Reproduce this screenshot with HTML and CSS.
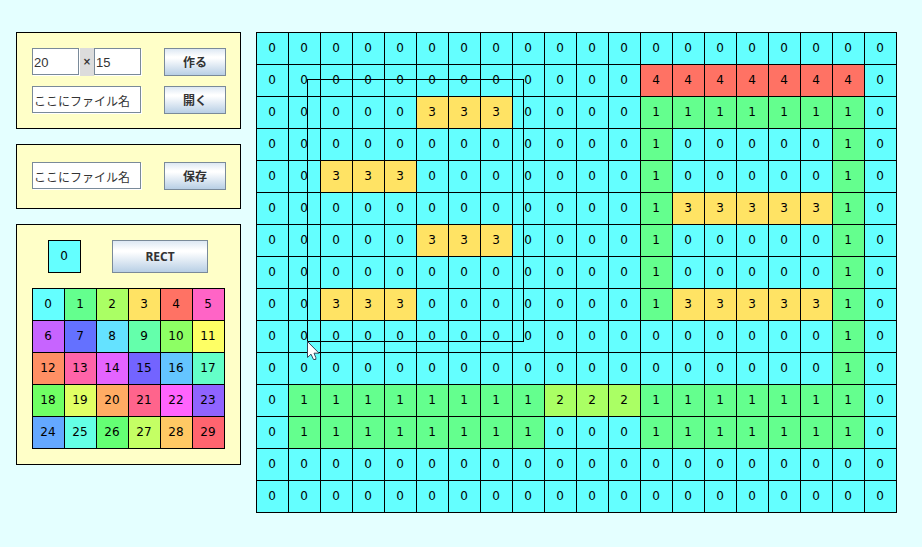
FILE: index.html
```
<!DOCTYPE html>
<html lang="ja">
<head>
<meta charset="utf-8">
<title>Map Editor</title>
<link rel="stylesheet" href="styles.css">
</head>
<body>
<main class="editor">
  <div class="sidebar">
    <form class="panel panel-new">
      <div class="row">
        <div class="size">
          <input class="field number" type="text" value="20" aria-label="幅">
          <span class="times">×</span>
          <input class="field number" type="text" value="15" aria-label="高さ">
        </div>
        <button class="button" type="button">作る</button>
      </div>
      <div class="row">
        <input class="field file" type="text" value="ここにファイル名" aria-label="開くファイル名">
        <button class="button" type="button">開く</button>
      </div>
    </form>
    <form class="panel panel-save">
      <div class="row">
        <input class="field file" type="text" value="ここにファイル名" aria-label="保存するファイル名">
        <button class="button" type="button">保存</button>
      </div>
    </form>
    <section class="panel panel-tools">
      <div class="tools">
        <div class="swatch">0</div>
        <button class="button mode" type="button">RECT</button>
      </div>
      <table class="tiles" id="palette"></table>
    </section>
  </div>
  <div class="map">
    <table class="tiles" id="map"></table>
    <div class="selection">
      <svg class="pointer" viewBox="0 0 13 20" width="13" height="20" aria-hidden="true">
        <path d="M.5 .5V16.5L4 13.2L6.5 18.5H8.8V16.5L7 12.2H12Z" fill="#fff" stroke="#31465c"/>
      </svg>
    </div>
  </div>
</main>
<script src="editor.js"></script>
</body>
</html>
```

FILE: styles.css
```
* {
  box-sizing: border-box;
}

body {
  margin: 0;
  padding: 32px 16px;
  background: #e4ffff;
  color: #333;
  font: 12px/16px "DejaVu Sans", "Noto Sans CJK JP", sans-serif;
}

.editor {
  display: flex;
  align-items: flex-start;
  gap: 15px;
}

.sidebar {
  display: flex;
  flex-direction: column;
  flex: none;
  gap: 15px;
}

.panel {
  display: flex;
  flex-direction: column;
  gap: 10px;
  padding: 15px 14px 14px 15px;
  border: 1px solid #000;
  background: #ffffc8;
}

.panel-save {
  padding-top: 17px;
  padding-bottom: 18px;
}

.panel-tools {
  gap: 15px;
  padding: 15px;
}

.row {
  display: flex;
  gap: 22px;
}

.size {
  display: flex;
}

.field {
  height: 27px;
  margin: 0 1px 1px 0;
  padding: 2px 1px 0;
  border: 1px solid #7a8a99;
  outline: 0;
  background: #fff;
  box-shadow: 1px 1px #fff;
  color: #333;
  font: 12px/16px "Liberation Sans", "Noto Sans CJK JP", sans-serif;
}

.number {
  width: 47px;
  font-size: 13px;
}

.file {
  width: 109px;
}

.times {
  width: 14px;
  background: #dcdcdc;
  font-size: 10px;
  font-weight: bold;
  line-height: 28px;
  text-align: center;
}

.button {
  width: 62px;
  height: 28px;
  padding: 1px 0 0;
  border: 1px solid #7a8a99;
  border-radius: 0;
  background: linear-gradient(#dde8f3, #fff 30%, #fff 35%, #b8cfe5);
  color: #333;
  font: bold 12px/16px "Noto Sans", "Noto Sans CJK JP", sans-serif;
}

.tools {
  display: flex;
  gap: 31px;
  padding-left: 16px;
}

.swatch {
  width: 33px;
  height: 33px;
  padding-right: 1px;
  border: 1px solid #000;
  background: #64ffff;
  color: #000;
  line-height: 31px;
  text-align: center;
}

.mode {
  width: 96px;
  height: 33px;
}

.tiles {
  border-collapse: collapse;
  table-layout: fixed;
  color: #000;
}

.tiles td {
  width: 32px;
  height: 32px;
  padding: 0 1px 2px 0;
  border: 1px solid #000;
  background: hsl(calc(180 - 43.6 * var(--tile)) 100% 69.6%);
  text-align: center;
}

.map {
  position: relative;
  flex: none;
}

.selection {
  position: absolute;
  left: 51px;
  top: 47px;
  width: 217px;
  height: 263px;
  border: 1px solid #000;
}

.pointer {
  position: absolute;
  left: -1px;
  top: 261px;
}
```

FILE: editor.js
```
const mapRows = [
  "00000000000000000000",
  "00000000000044444440",
  "00000333000011111110",
  "00000000000010000010",
  "00333000000010000010",
  "00000000000013333310",
  "00000333000010000010",
  "00000000000010000010",
  "00333000000013333310",
  "00000000000000000010",
  "00000000000000000010",
  "01111111122211111110",
  "01111111100011111110",
  "00000000000000000000",
  "00000000000000000000"
].map(row => [...row].map(Number));

const paletteRows = Array.from({ length: 5 }, (_, r) =>
  Array.from({ length: 6 }, (_, c) => r * 6 + c));

function fill(table, rows) {
  for (const row of rows) {
    const tr = table.insertRow();
    for (const tile of row) {
      const td = tr.insertCell();
      td.textContent = tile;
      td.style.setProperty("--tile", tile);
    }
  }
}

fill(document.getElementById("map"), mapRows);
fill(document.getElementById("palette"), paletteRows);
```
